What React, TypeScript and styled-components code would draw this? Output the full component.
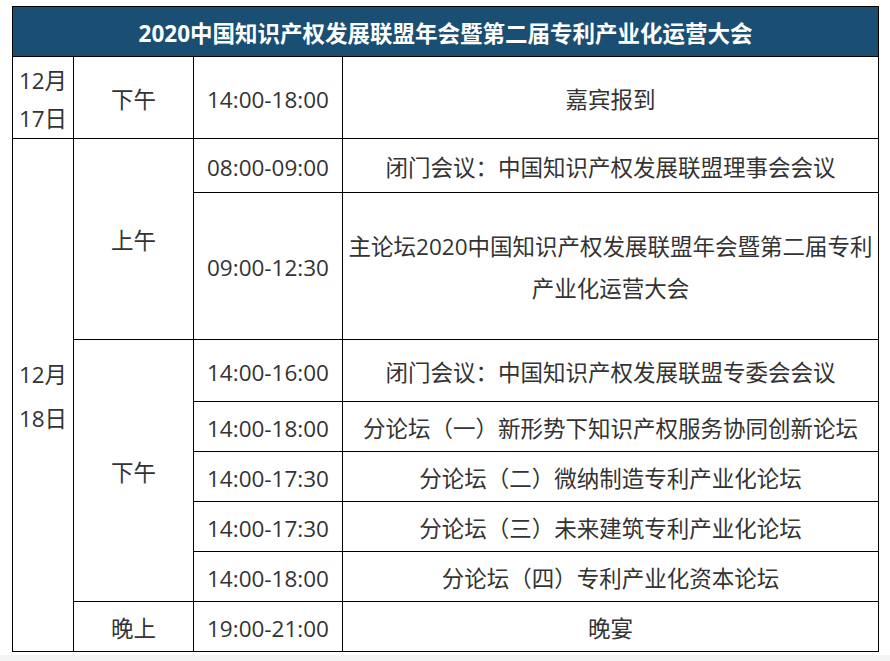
import React from "react";
import styled, { createGlobalStyle } from "styled-components";

const FONT = `"Open Sans", "Noto Sans CJK SC", sans-serif`;

const Global = createGlobalStyle`
  html, body { margin: 0; padding: 0; background: #ffffff; }
  body { font-family: ${FONT}; color: #333; }
`;

const Page = styled.div`
  width: 890px;
  height: 661px;
  display: flex;
  flex-direction: column;
  background: #ffffff;
`;

const Wrap = styled.div`
  padding: 6px 12px 0 12px;
  flex: none;
`;

const Footer = styled.div`
  flex: 1;
  margin-top: 3px;
  background: #f4f4f4;
`;

const Table = styled.table`
  width: 866px;
  border-collapse: collapse;
  table-layout: fixed;
  font-family: ${FONT};
  font-size: 22.5px;
  color: #333;
`;

const Row = styled.tr<{ $h: number }>`
  height: ${(p) => p.$h}px;
`;

const HeadCell = styled.th`
  background: #1a4e73;
  color: #ffffff;
  font-weight: 700;
  font-size: 22.5px;
  border: 1px solid #000;
  padding: 2px 0 0 0;
  text-align: center;
  vertical-align: middle;
  white-space: nowrap;
`;

const Cell = styled.td<{ $lh?: number }>`
  border: 1px solid #000;
  padding: 4px 2px 0 2px;
  text-align: center;
  vertical-align: middle;
  white-space: nowrap;
  line-height: ${(p) => (p.$lh ? `${p.$lh}px` : "1.3")};
`;

const DateCell = styled(Cell)`
  white-space: normal;
`;

export default function App() {
  return (
    <Page>
      <Global />
      <Wrap>
        <Table>
          <colgroup>
            <col style={{ width: 61 }} />
            <col style={{ width: 120 }} />
            <col style={{ width: 149 }} />
            <col style={{ width: 536 }} />
          </colgroup>
          <tbody>
            <Row $h={50}>
              <HeadCell colSpan={4}>2020中国知识产权发展联盟年会暨第二届专利产业化运营大会</HeadCell>
            </Row>
            <Row $h={82}>
              <DateCell $lh={38}>
                12月
                <br />
                17日
              </DateCell>
              <Cell>下午</Cell>
              <Cell>14:00-18:00</Cell>
              <Cell>嘉宾报到</Cell>
            </Row>
            <Row $h={54}>
              <DateCell rowSpan={9} $lh={44}>
                12月
                <br />
                18日
              </DateCell>
              <Cell rowSpan={2}>上午</Cell>
              <Cell>08:00-09:00</Cell>
              <Cell>闭门会议：中国知识产权发展联盟理事会会议</Cell>
            </Row>
            <Row $h={147}>
              <Cell>09:00-12:30</Cell>
              <Cell $lh={42}>
                主论坛2020中国知识产权发展联盟年会暨第二届专利
                <br />
                产业化运营大会
              </Cell>
            </Row>
            <Row $h={62}>
              <Cell rowSpan={5}>下午</Cell>
              <Cell>14:00-16:00</Cell>
              <Cell>闭门会议：中国知识产权发展联盟专委会会议</Cell>
            </Row>
            <Row $h={50}>
              <Cell>14:00-18:00</Cell>
              <Cell>分论坛（一）新形势下知识产权服务协同创新论坛</Cell>
            </Row>
            <Row $h={50}>
              <Cell>14:00-17:30</Cell>
              <Cell>分论坛（二）微纳制造专利产业化论坛</Cell>
            </Row>
            <Row $h={50}>
              <Cell>14:00-17:30</Cell>
              <Cell>分论坛（三）未来建筑专利产业化论坛</Cell>
            </Row>
            <Row $h={50}>
              <Cell>14:00-18:00</Cell>
              <Cell>分论坛（四）专利产业化资本论坛</Cell>
            </Row>
            <Row $h={50}>
              <Cell>晚上</Cell>
              <Cell>19:00-21:00</Cell>
              <Cell>晚宴</Cell>
            </Row>
          </tbody>
        </Table>
      </Wrap>
      <Footer />
    </Page>
  );
}
